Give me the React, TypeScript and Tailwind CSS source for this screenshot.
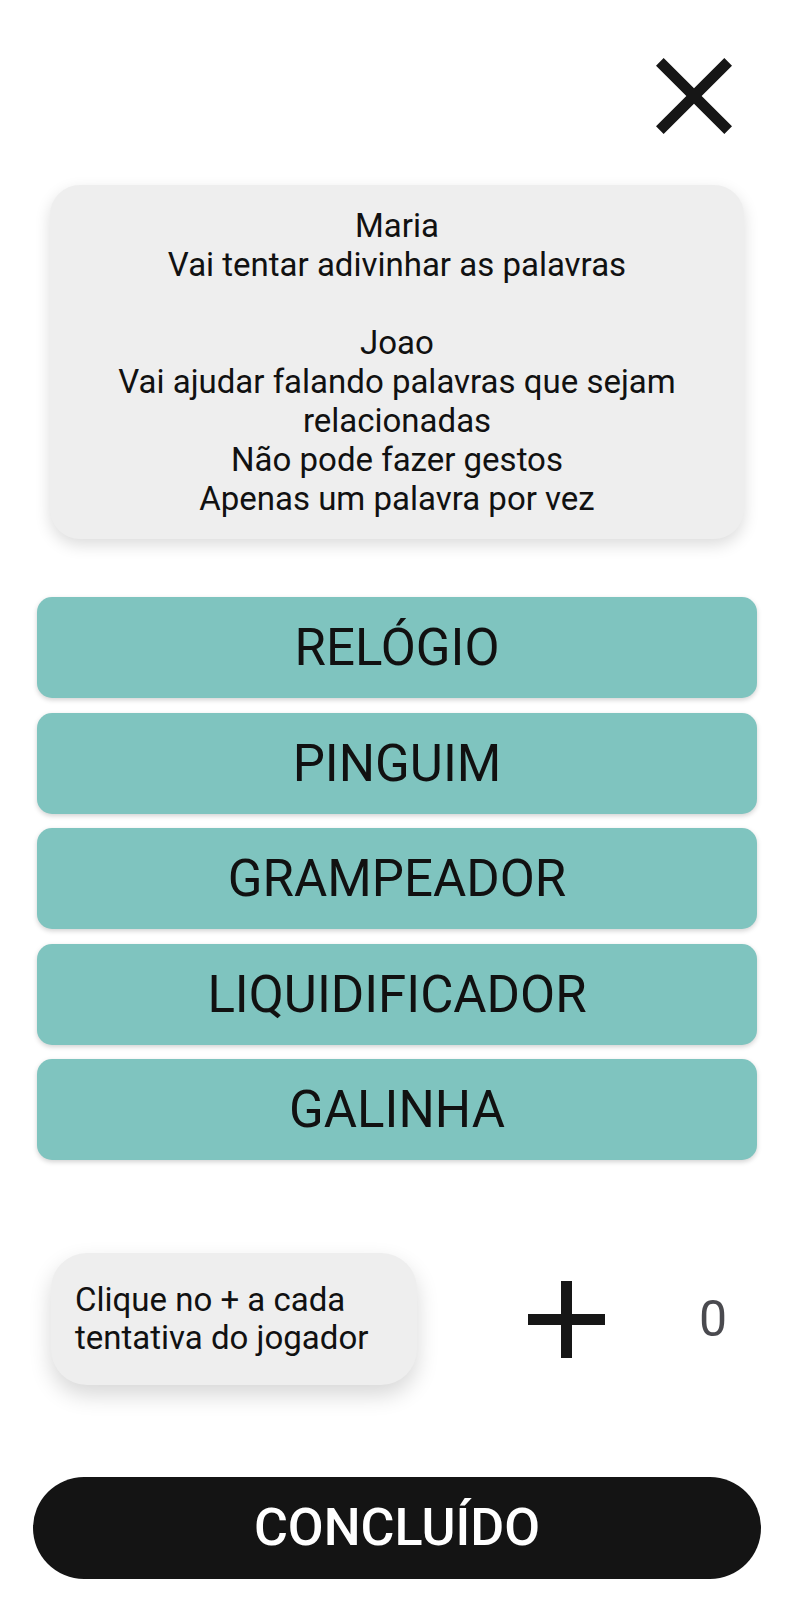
const words = ["RELÓGIO", "PINGUIM", "GRAMPEADOR", "LIQUIDIFICADOR", "GALINHA"];

const CloseIcon = () => (
	<svg width="76" height="76" viewBox="5 5 14 14" fill="#161616">
		<path d="M19 6.41L17.59 5 12 10.59 6.41 5 5 6.41 10.59 12 5 17.59 6.41 19 12 13.41 17.59 19 19 17.59 13.41 12z" />
	</svg>
);

const PlusIcon = () => (
	<svg width="77" height="77" viewBox="5 5 14 14" fill="#161616">
		<path d="M19 13h-6v6h-2v-6H5v-2h6V5h2v6h6v2z" />
	</svg>
);

const App = () => {
	return (
		<div className="min-h-[1600px] w-full bg-white font-['Roboto','Noto_Sans',sans-serif] text-[#111111]">
			<div className="flex justify-end pr-[62px] pt-[58px]">
				<CloseIcon />
			</div>

			<div className="mx-[50px] mt-[51px] rounded-[30px] bg-[#eeeeee] px-[36px] py-[21px] text-center text-[33px] leading-[39px] shadow-[0_6px_16px_rgba(0,0,0,0.14)]">
				<div>Maria</div>
				<div>Vai tentar adivinhar as palavras</div>
				<div className="h-[39px]"></div>
				<div>Joao</div>
				<div>Vai ajudar falando palavras que sejam relacionadas</div>
				<div>Não pode fazer gestos</div>
				<div>Apenas um palavra por vez</div>
			</div>

			<div className="mx-[37px] mt-[58px] flex flex-col gap-[14.5px]">
				{words.map((w) => (
					<div
						key={w}
						className="flex h-[101px] items-center justify-center rounded-[15px] bg-[#7fc4bf] text-[51px] leading-none shadow-[0_2px_5px_rgba(0,0,0,0.18)]"
					>
						{w}
					</div>
				))}
			</div>

			<div className="mt-[93px] flex items-center pl-[51px]">
				<div className="flex h-[132px] w-[366px] items-center rounded-[36px] bg-[#eeeeee] pl-[24px] text-[33px] leading-[38px] shadow-[0_10px_22px_rgba(0,0,0,0.16)]">
					<div>
						Clique no + a cada
						<br />
						tentativa do jogador
					</div>
				</div>
				<div className="ml-[111px] flex">
					<PlusIcon />
				</div>
				<div className="ml-[94px] text-[50px] leading-none text-[#4a4a4f]">0</div>
			</div>

			<div className="mx-[33px] mt-[92px] flex h-[102px] items-center justify-center rounded-full bg-[#141414] text-[52px] font-medium leading-none text-white">
				CONCLUÍDO
			</div>
		</div>
	);
};

export default App;
